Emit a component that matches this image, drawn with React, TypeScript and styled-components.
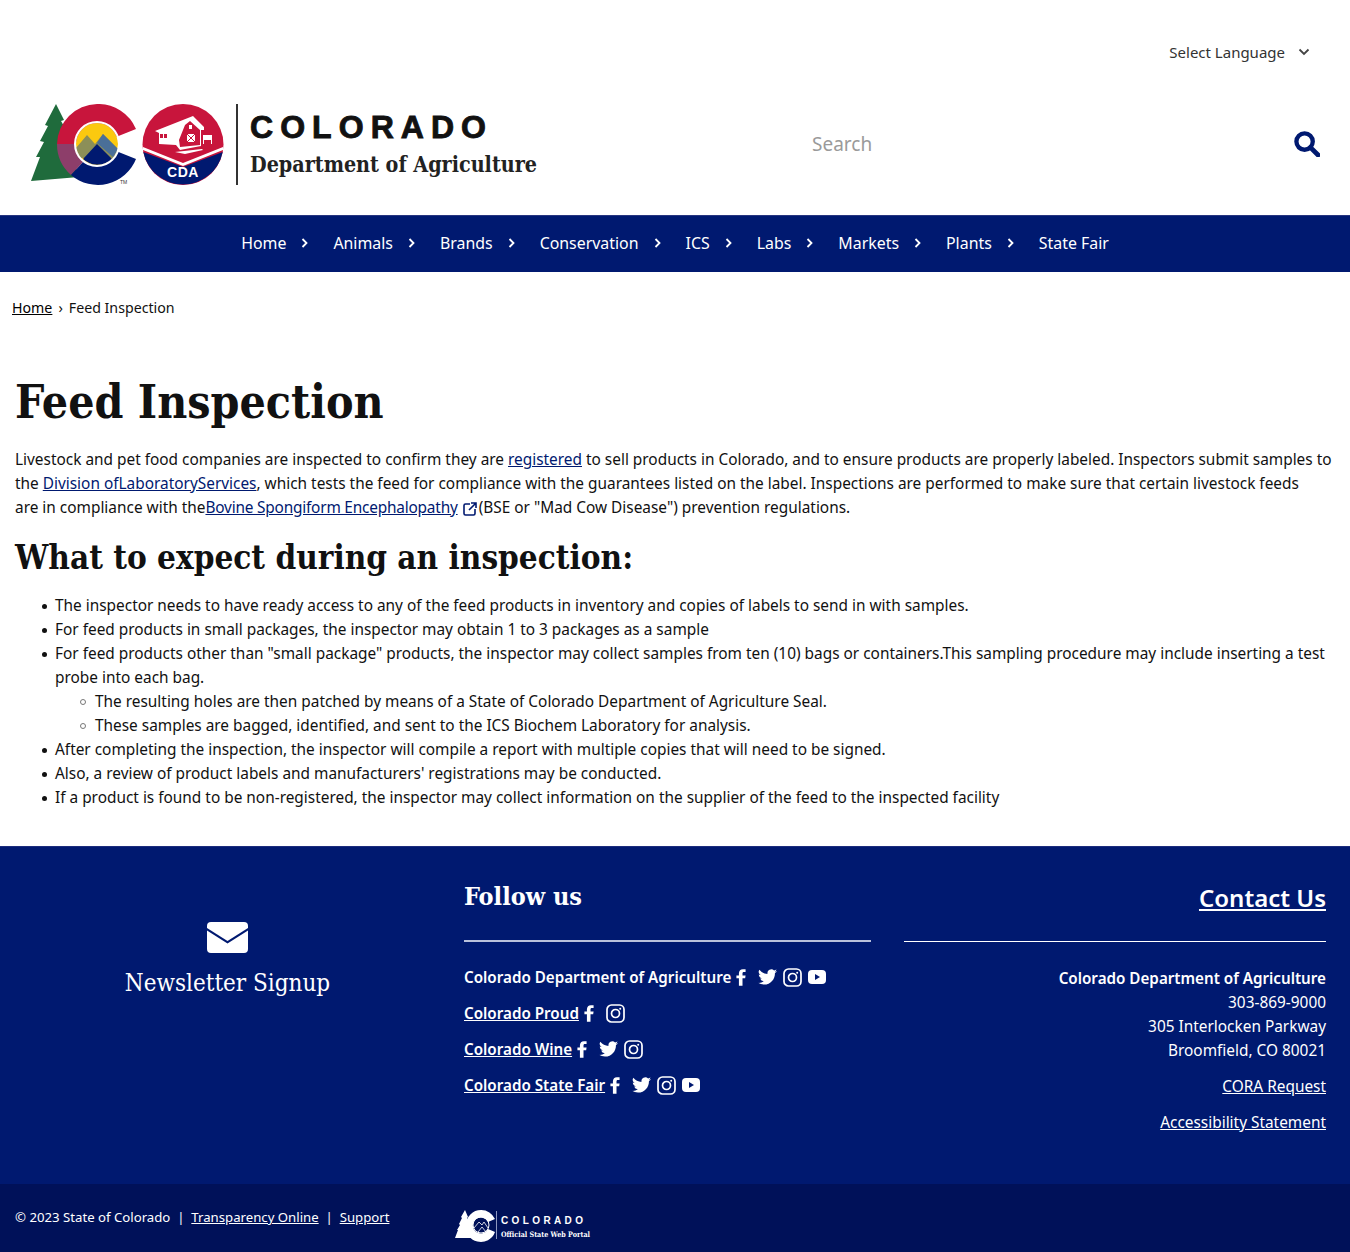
import React from "react";
import styled, { createGlobalStyle } from "styled-components";

const sans = `"Noto Sans", sans-serif`;
const slab = `"DejaVu Serif", serif`;
const navy = "#001970";

const Global = createGlobalStyle`
  html, body { margin: 0; padding: 0; background: #fff; }
  body { font-family: ${sans}; font-size: 15.4px; line-height: 24px; color: #111; }
`;
const Page = styled.div`width: 1350px; height: 1252px; display: flex; flex-direction: column; overflow: hidden;`;
const TopBar = styled.div`height: 104px; box-sizing: border-box; padding: 40px 40px 0 0; display: flex; justify-content: flex-end; align-items: flex-start;`;
const Lang = styled.div`display: flex; align-items: center; gap: 13px; color: #333; font-size: 15px;`;
const Header = styled.header`height: 111px; box-sizing: border-box; display: flex; align-items: flex-start; padding-left: 30px;`;
const LogoSvg = styled.svg`display: block; flex: none;`;
const SearchBox = styled.div`margin-left: 272px; width: 508px; height: 80px; display: flex; align-items: center; justify-content: space-between; font-size: 19px; color: #9a9a9a;`;
const Nav = styled.nav`height: 57px; background: ${navy}; border-top: 1px solid #27357f; box-sizing: border-box; padding-bottom: 2px; display: flex; justify-content: center; align-items: center; color: #fff; font-size: 15.900px;`;
const NavItem = styled.div`display: flex; align-items: center;`;
const NavChevron = styled.svg`margin: 0 25px 0 15px;`;
const Crumbs = styled.div`padding: 24px 12px 0; height: 72px; box-sizing: border-box; font-size: 14.200px; display: flex; align-items: flex-start; gap: 6px;`;
const CrumbLink = styled.a`color: #000; text-decoration: underline;`;
const Main = styled.main`padding: 0 15px; height: 502px; box-sizing: border-box;`;
const H1 = styled.h1`font-family: ${slab}; font-stretch: condensed; font-size: 46px; line-height: 58px; margin: 29px 0 17px; color: #111;`;
const P = styled.p`margin: 0;`;
const A = styled.a`color: ${navy}; text-decoration: underline;`;
const TightA = styled(A)`letter-spacing: -0.2px;`;
const H2 = styled.h2`font-family: ${slab}; font-stretch: condensed; font-size: 33px; line-height: 42px; margin: 17px 0 15px; color: #111;`;
const Ul = styled.ul`margin: 0; padding-left: 40px; list-style: none;`;
const Li = styled.li`
  position: relative;
  &::before { content: ""; position: absolute; left: -13px; top: 10px; width: 5px; height: 5px; border-radius: 50%; background: #111; }
`;
const SubUl = styled.ul`margin: 0; padding-left: 40px; list-style: none;`;
const SubLi = styled.li`
  position: relative;
  &::before { content: ""; position: absolute; left: -15px; top: 9px; width: 4px; height: 4px; border-radius: 50%; border: 1px solid #777; }
`;
const Ext = styled.svg`margin: 0 2px 0 5px; vertical-align: -3px;`;
const Footer = styled.footer`height: 338px; background: ${navy}; color: #fff; display: grid; grid-template-columns: 464px 407px 455px; box-sizing: border-box; border-top: 1px solid #1c2c7c;`;
const Newsletter = styled.div`display: flex; flex-direction: column; align-items: center; padding: 75px 9px 0 0;`;
const NewsText = styled.div`font-family: ${slab}; font-stretch: condensed; font-size: 24px; line-height: 30px; margin-top: 15px;`;
const Col = styled.div`padding-top: 32px;`;
const RightCol = styled(Col)`margin-left: 33px; text-align: right;`;
const FootH = styled.div`font-family: ${slab}; font-stretch: condensed; font-weight: 700; font-size: 25px; line-height: 36px;`;
const ContactH = styled.a`display: block; color: #fff; font-weight: 600; font-size: 24px; line-height: 38px; text-decoration: underline;`;
const Rule = styled.hr<{ $thin?: boolean }>`border: 0; border-top: ${p => (p.$thin ? "1px solid #fff" : "2px solid #b9c1dc")}; margin: ${p => (p.$thin ? "24px 0 24px" : "25px 0 23px")};`;
const Social = styled.div`display: flex; align-items: center; height: 24px; margin-bottom: 12px; font-weight: 600; font-size: 15.200px;`;
const SocialLink = styled.span<{ $u?: boolean }>`text-decoration: ${p => (p.$u ? "underline" : "none")};`;
const Icons = styled.span`display: flex; align-items: center; gap: 6px; margin-left: 5px;`;
const FSvg = styled.svg`margin-right: 6px;`;
const Strong = styled.strong`font-weight: 600; font-size: 15.200px;`;
const FootA = styled.a`color: #fff; text-decoration: underline; display: block; margin-top: 12px;`;
const Bottom = styled.div`height: 68px; background: #001159; color: #fff; display: flex; box-sizing: border-box; padding: 21px 0 0 15px; font-size: 13.200px;`;
const BotText = styled.div`width: 440px; white-space: pre;`;
const BotA = styled.a`color: #fff; text-decoration: underline;`;
const SmallLogoSvg = styled.svg`display: block; margin-top: 3px;`;

const Chevron = () => (
  <NavChevron width="7" height="10" viewBox="0 0 7 10" fill="none" stroke="#fff" strokeWidth="1.8"><path d="M1.5 1l4 4-4 4" /></NavChevron>
);
const F = () => <FSvg width="10" height="19" viewBox="0 0 12 20" fill="#fff"><path d="M3.500 20V11H.5V7.500h3V5c0-3.200 2-5 4.700-5h3.300v3.500H9.500c-1.300 0-1.700.6-1.700 1.800v2.200h3.700L11 11H7.800v9z" /></FSvg>;
const T = () => <svg width="19" height="16" viewBox="0 0 24 20" fill="#fff"><path d="M24 2.400a10 10 0 0 1-2.800.8 5 5 0 0 0 2.200-2.700 10 10 0 0 1-3.100 1.200A4.900 4.900 0 0 0 12 6.100 14 14 0 0 1 1.700.9a4.900 4.900 0 0 0 1.500 6.600 5 5 0 0 1-2.200-.6c0 2.400 1.700 4.400 3.900 4.900a5 5 0 0 1-2.200.1 4.900 4.900 0 0 0 4.600 3.400A9.900 9.900 0 0 1 0 17.400 14 14 0 0 0 7.500 19.600c9 0 14.100-7.600 13.900-14.500A10 10 0 0 0 24 2.400z" /></svg>;
const I = () => <svg width="19" height="19" viewBox="0 0 19 19" fill="none" stroke="#fff" strokeWidth="1.7"><rect x="1" y="1" width="17" height="17" rx="4.500" /><circle cx="9.500" cy="9.500" r="4" /><circle cx="14.200" cy="4.800" r="1" fill="#fff" stroke="none" /></svg>;
const Y = () => <svg width="18" height="14" viewBox="0 0 18 14"><rect width="18" height="14" rx="4" fill="#fff" /><path d="M7 4l5 3-5 3z" fill={navy} /></svg>;

const Logo = () => (
  <LogoSvg width="510" height="84" viewBox="30 104 510 84">
    <path d="M56 104l8 16-3 1 8 14-4 1 9 16-3 1 8 24-48 4 9-24-4 0 8-15-4-1 8-15-3-1z" fill="#1f6b3c" />
    <path d="M97 104a41 41 0 0 1 39 25l-20 8a22 22 0 0 0-40 7H57a41 41 0 0 1 40-40z" fill="#c8153c" />
    <path d="M57 144h19a22 22 0 0 0 8 17l-13 14a41 41 0 0 1-14-31z" fill="#8d3e6a" />
    <path d="M84 161a22 22 0 0 0 32-10l20 8a41 41 0 0 1-65 16z" fill={navy} />
    <circle cx="97" cy="144" r="21" fill="#fbc90f" />
    <path d="M76 148l11-13 8 9 8-10 15 15-4 9H80z" fill="#8c8f58" />
    <path d="M97 143l6-9 15 15-5 8z" fill="#4a6f98" />
    <path d="M83 159l14-15 15 15a21 21 0 0 1-29 0z" fill={navy} />
    <circle cx="97" cy="144" r="22" fill="none" stroke="#fff" strokeWidth="2" />
    <text x="120" y="184" fontFamily="Liberation Sans" fontSize="5" fill="#333">TM</text>
    <circle cx="183" cy="144.500" r="40.500" fill="#c8153c" />
    <path d="M143.300 152L183 167l39.700-15a40.500 40.500 0 0 1-79.400 0z" fill={navy} />
    <path d="M143 147l40 16 40-16v3l-40 16-40-16z" fill="#fff" />
    <path d="M155 131l38-15 11 11v3h-3v16l-21 4-4-5-17-1v-11z" fill="#fff" />
    <path d="M179 140l6-15 5-4 10 9v15l-20 2z" fill="#c8153c" />
    <rect x="187" y="134" width="8" height="8" fill="#fff" />
    <path d="M187 134l8 8m0-8l-8 8" stroke="#c8153c" strokeWidth="1" />
    <rect x="189" y="125" width="3" height="4" fill="#fff" />
    <path d="M203 135h9v9h-1v-4h-7v4h-1z" fill="#fff" />
    <rect x="160" y="134" width="3" height="4" fill="#c8153c" />
    <rect x="164" y="134" width="3" height="4" fill="#c8153c" />
    <path d="M175 152l27-3 1 1-18 4z" fill="#fff" />
    <text x="183" y="177" fontFamily="Liberation Sans" fontWeight="700" fontSize="14" letterSpacing=".5" fill="#fff" textAnchor="middle">CDA</text>
    <rect x="236" y="104" width="2" height="81" fill="#333" />
    <text x="250" y="138" fontFamily="Liberation Sans" fontWeight="700" fontSize="32" stroke="#111" strokeWidth=".9" fill="#111" textLength="236">COLORADO</text>
    <text x="250" y="172" fontFamily="DejaVu Serif" fontWeight="700" fontSize="22" fill="#222" textLength="287" lengthAdjust="spacingAndGlyphs">Department of Agriculture</text>
  </LogoSvg>
);
const SmallLogo = () => (
  <SmallLogoSvg width="140" height="36" viewBox="0 0 140 36">
    <path d="M10 2l3 7-1 1 3 5-1 1 3 7-1 2 4 5H0l3-8-1 0 3-5-1-1 3-6-1-1z" fill="#fff" />
    <path d="M26 2a15 15 0 0 1 14 9l-7 3a8 8 0 1 0 0 7l7 3a15 15 0 0 1-29 -7 15 15 0 0 1 15-15z" fill="#fff" />
    <circle cx="26" cy="17" r="8" fill="none" stroke="#fff" strokeWidth="1" />
    <path d="M19 20l5-6 3 3 2-3 4 6M23 24l4-5 4 5" fill="none" stroke="#fff" strokeWidth=".8" />
    <rect x="41" y="3" width="1" height="28" fill="#8d97c0" />
    <text x="46" y="16" fontFamily="Liberation Sans" fontWeight="700" fontSize="10" fill="#fff" textLength="82">COLORADO</text>
    <text x="46" y="29" fontFamily="DejaVu Serif" fontWeight="700" fontSize="7.500" fill="#fff" textLength="89" lengthAdjust="spacingAndGlyphs">Official State Web Portal</text>
  </SmallLogoSvg>
);

const nav = ["Home", "Animals", "Brands", "Conservation", "ICS", "Labs", "Markets", "Plants", "State Fair"];

export default function App() {
  return (
    <Page>
      <Global />
      <TopBar>
        <Lang>Select Language
          <svg width="12" height="8" viewBox="0 0 12 8" fill="none" stroke="#444" strokeWidth="1.800"><path d="M1.500 1.500L6 6l4.500-4.500" /></svg>
        </Lang>
      </TopBar>
      <Header>
        <Logo />
        <SearchBox>Search
          <svg width="26" height="26" viewBox="0 0 27 27" fill="none" stroke={navy}><circle cx="11" cy="11" r="8.500" strokeWidth="4.500" /><path d="M17 17l8 8" strokeWidth="5" strokeLinecap="round" /></svg>
        </SearchBox>
      </Header>
      <Nav>
        {nav.map((n, i) => <NavItem key={n}>{n}{i < nav.length - 1 && <Chevron />}</NavItem>)}
      </Nav>
      <Crumbs><CrumbLink>Home</CrumbLink><span>›</span><span>Feed Inspection</span></Crumbs>
      <Main>
        <H1>Feed Inspection</H1>
        <P>Livestock and pet food companies are inspected to confirm they are <A>registered</A> to sell products in Colorado, and to ensure products are properly labeled. Inspectors submit samples to the <A>Division ofLaboratoryServices</A>, which tests the feed for compliance with the guarantees listed on the label. Inspections are performed to make sure that certain livestock feeds<br />are in compliance with the<TightA>Bovine Spongiform Encephalopathy</TightA><Ext width="14" height="14" viewBox="0 0 14 14" fill="none" stroke={navy} strokeWidth="1.600"><path d="M7 2H2.500A1.500 1.500 0 0 0 1 3.500v8A1.500 1.500 0 0 0 2.500 13h8a1.500 1.500 0 0 0 1.500-1.500V7M8 1h5v5M13 1L6 8" /></Ext>(BSE or "Mad Cow Disease") prevention regulations.</P>
        <H2>What to expect during an inspection:</H2>
        <Ul>
          <Li>The inspector needs to have ready access to any of the feed products in inventory and copies of labels to send in with samples.</Li>
          <Li>For feed products in small packages, the inspector may obtain 1 to 3 packages as a sample</Li>
          <Li>For feed products other than "small package" products, the inspector may collect samples from ten (10) bags or containers.This sampling procedure may include inserting a test probe into each bag.
            <SubUl>
              <SubLi>The resulting holes are then patched by means of a State of Colorado Department of Agriculture Seal.</SubLi>
              <SubLi>These samples are bagged, identified, and sent to the ICS Biochem Laboratory for analysis.</SubLi>
            </SubUl>
          </Li>
          <Li>After completing the inspection, the inspector will compile a report with multiple copies that will need to be signed.</Li>
          <Li>Also, a review of product labels and manufacturers' registrations may be conducted.</Li>
          <Li>If a product is found to be non-registered, the inspector may collect information on the supplier of the feed to the inspected facility</Li>
        </Ul>
      </Main>
      <Footer>
        <Newsletter>
          <svg width="41" height="31" viewBox="0 0 41 31"><path d="M4 0h33a4 4 0 0 1 4 4v2L20.500 19 0 6V4a4 4 0 0 1 4-4z" fill="#fff" /><path d="M0 8.500L20.500 21.500 41 8.500V27a4 4 0 0 1-4 4H4a4 4 0 0 1-4-4z" fill="#fff" /></svg>
          <NewsText>Newsletter Signup</NewsText>
        </Newsletter>
        <Col>
          <FootH>Follow us</FootH>
          <Rule />
          <Social><SocialLink>Colorado Department of Agriculture</SocialLink><Icons><F /><T /><I /><Y /></Icons></Social>
          <Social><SocialLink $u>Colorado Proud</SocialLink><Icons><F /><I /></Icons></Social>
          <Social><SocialLink $u>Colorado Wine</SocialLink><Icons><F /><T /><I /></Icons></Social>
          <Social><SocialLink $u>Colorado State Fair</SocialLink><Icons><F /><T /><I /><Y /></Icons></Social>
        </Col>
        <RightCol>
          <ContactH>Contact Us</ContactH>
          <Rule $thin />
          <Strong>Colorado Department of Agriculture</Strong><br />303-869-9000<br />305 Interlocken Parkway<br />Broomfield, CO 80021
          <FootA>CORA Request</FootA>
          <FootA>Accessibility Statement</FootA>
        </RightCol>
      </Footer>
      <Bottom>
        <BotText>© 2023 State of Colorado  |  <BotA>Transparency Online</BotA>  |  <BotA>Support</BotA></BotText>
        <SmallLogo />
      </Bottom>
    </Page>
  );
}
